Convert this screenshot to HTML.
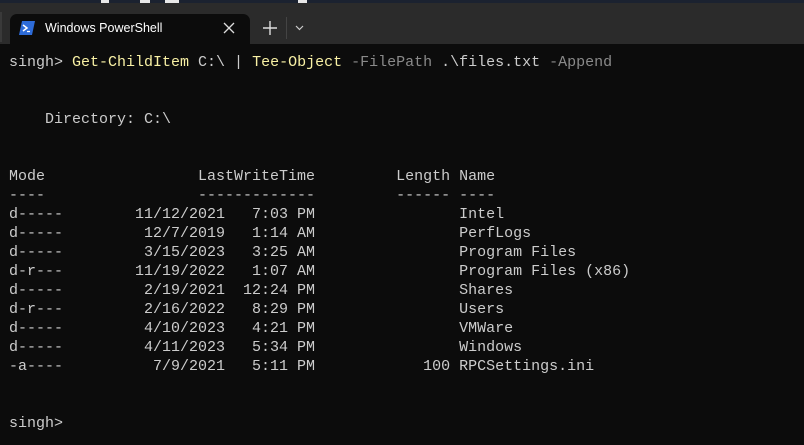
<!DOCTYPE html><html><head><style>
body{margin:0;width:804px;height:445px;background:#0c0c0c;overflow:hidden;position:relative;font-family:"Liberation Sans",sans-serif}
.top{position:absolute;left:0;top:0;width:804px;height:3px;background:#1b2230}
.w{position:absolute;top:0;height:3px;background:#e8e8e8}
.bar{position:absolute;left:0;top:3px;width:804px;height:41px;background:#2b2b2b}
.tab{position:absolute;left:10px;top:14px;width:240px;height:30px;background:#0c0c0c;border-radius:7px 7px 0 0}
.tt{position:absolute;left:45px;top:21px;color:#fff;font-size:12.5px}
pre{position:absolute;left:9px;top:53px;margin:0;font:15px/19px "Liberation Mono",monospace;color:#cccccc}
.y{color:#f9f1a5}.g{color:#8a8a8a}
</style></head><body>
<div class="top"></div>
<div class="w" style="left:101px;width:8px"></div>
<div class="w" style="left:140px;width:10px"></div>
<div class="w" style="left:165px;width:14px"></div>
<div class="w" style="left:298px;width:9px"></div>
<div class="bar"></div>
<div style="position:absolute;left:0;top:12px;width:2px;height:30px;background:#3a3a3a"></div>
<div class="tab"></div>
<svg style="position:absolute;left:19px;top:21px" width="16" height="14" viewBox="0 0 16 14"><path d="M3 0H16L13 14H0Z" fill="#2d6bd8"/><path d="M4 4L8 7L4 10" stroke="#fff" stroke-width="1.5" fill="none"/><path d="M8 10.5H11" stroke="#fff" stroke-width="1.3"/></svg>
<div class="tt">Windows PowerShell</div>
<svg style="position:absolute;left:223px;top:22px" width="12" height="12"><path d="M1 1L11 11M11 1L1 11" stroke="#ddd" stroke-width="1.3"/></svg>
<svg style="position:absolute;left:263px;top:21px" width="14" height="14"><path d="M7 0V14M0 7H14" stroke="#ddd" stroke-width="1.4"/></svg>
<div style="position:absolute;left:286px;top:17px;width:1px;height:22px;background:#444"></div>
<svg style="position:absolute;left:295px;top:25px" width="9" height="6"><path d="M1 1L4.5 4.5L8 1" stroke="#ccc" stroke-width="1.2" fill="none"/></svg>
<pre>singh&gt; <span class="y">Get-ChildItem</span> C:\ | <span class="y">Tee-Object</span> <span class="g">-FilePath</span> .\files.txt <span class="g">-Append</span>


    Directory: C:\


Mode                 LastWriteTime         Length Name
----                 -------------         ------ ----
d-----        11/12/2021   7:03 PM                Intel
d-----         12/7/2019   1:14 AM                PerfLogs
d-----         3/15/2023   3:25 AM                Program Files
d-r---        11/19/2022   1:07 AM                Program Files (x86)
d-----         2/19/2021  12:24 PM                Shares
d-r---         2/16/2022   8:29 PM                Users
d-----         4/10/2023   4:21 PM                VMWare
d-----         4/11/2023   5:34 PM                Windows
-a----          7/9/2021   5:11 PM            100 RPCSettings.ini


singh&gt;</pre>
</body></html>
